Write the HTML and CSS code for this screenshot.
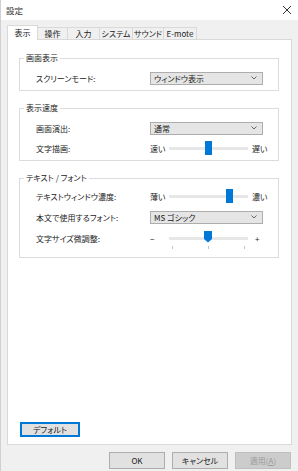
FILE: index.html
```html
<!DOCTYPE html>
<html lang="ja">
<head>
    <meta charset="UTF-8">
    <title>設定</title>
    <link rel="stylesheet" href="styles.css">
</head>
<body>
<div class="dialog">
    <div class="title-bar">
        <span class="title-text">設定</span>
        <svg class="close-icon" width="10" height="10" viewBox="0 0 10 10">
            <path d="M1 1 L9 9 M9 1 L1 9" stroke="#333" stroke-width="1" fill="none"/>
        </svg>
    </div>

    <div class="tab-strip">
        <div class="tab tab-active" style="width: 31px">表示</div>
        <div class="tab" style="width: 31px">操作</div>
        <div class="tab" style="width: 33px">入力</div>
        <div class="tab" style="width: 34px">システム</div>
        <div class="tab" style="width: 32px">サウンド</div>
        <div class="tab" style="width: 34px">E-mote</div>
    </div>

    <div class="tab-panel">
        <!-- 画面表示 -->
        <fieldset class="group">
            <legend class="group-title">画面表示</legend>
            <div class="group-body">
                <div class="row">
                    <span class="row-label">スクリーンモード:</span>
                    <div class="select">
                        <span>ウィンドウ表示</span>
                        <svg class="chevron" width="6" height="4" viewBox="0 0 6 4"><path d="M0.5 0.5 L3 3 L5.5 0.5" stroke="#666" fill="none"/></svg>
                    </div>
                </div>
            </div>
        </fieldset>

        <!-- 表示速度 -->
        <fieldset class="group">
            <legend class="group-title">表示速度</legend>
            <div class="group-body">
                <div class="row">
                    <span class="row-label">画面演出:</span>
                    <div class="select">
                        <span>通常</span>
                        <svg class="chevron" width="6" height="4" viewBox="0 0 6 4"><path d="M0.5 0.5 L3 3 L5.5 0.5" stroke="#666" fill="none"/></svg>
                    </div>
                </div>
                <div class="row">
                    <span class="row-label">文字描画:</span>
                    <div class="slider">
                        <span class="slider-end">速い</span>
                        <div class="track">
                            <div class="thumb" style="left: 36px"></div>
                        </div>
                        <span class="slider-end">遅い</span>
                    </div>
                </div>
            </div>
        </fieldset>

        <!-- テキスト / フォント -->
        <fieldset class="group">
            <legend class="group-title">テキスト / フォント</legend>
            <div class="group-body group-body-text">
                <div class="row">
                    <span class="row-label">テキストウィンドウ濃度:</span>
                    <div class="slider">
                        <span class="slider-end">薄い</span>
                        <div class="track">
                            <div class="thumb" style="left: 57px"></div>
                        </div>
                        <span class="slider-end">濃い</span>
                    </div>
                </div>
                <div class="row">
                    <span class="row-label">本文で使用するフォント:</span>
                    <div class="select">
                        <span>MS ゴシック</span>
                        <svg class="chevron" width="6" height="4" viewBox="0 0 6 4"><path d="M0.5 0.5 L3 3 L5.5 0.5" stroke="#666" fill="none"/></svg>
                    </div>
                </div>
                <div class="row">
                    <span class="row-label">文字サイズ微調整:</span>
                    <div class="slider">
                        <span class="slider-end">−</span>
                        <div class="track">
                            <div class="thumb thumb-point" style="left: 35px"></div>
                            <span class="tick" style="left: 3px"></span>
                            <span class="tick" style="left: 39px"></span>
                            <span class="tick" style="left: 75px"></span>
                        </div>
                        <span class="slider-end slider-plus">+</span>
                    </div>
                </div>
            </div>
        </fieldset>

        <button class="btn btn-default">デフォルト</button>
    </div>

    <div class="button-bar">
        <button class="btn btn-footer">OK</button>
        <button class="btn btn-footer">キャンセル</button>
        <button class="btn btn-footer btn-disabled">適用(<u>A</u>)</button>
    </div>
</div>
</body>
</html>
```

FILE: styles.css
```css
* {
    margin: 0;
    padding: 0;
    box-sizing: border-box;
}

body {
    font-family: "Noto Sans CJK JP", "Noto Sans", sans-serif;
    font-size: 8px;
    font-feature-settings: "palt";
    color: #1a1a1a;
    background: #f0f0f0;
}

.dialog {
    width: 298px;
    height: 471px;
    display: flex;
    flex-direction: column;
    border-left: 1px solid #d0d0d0;
}

/* タイトルバー */
.title-bar {
    height: 20px;
    background: #ffffff;
    display: flex;
    align-items: center;
    justify-content: space-between;
    padding: 0 6px 0 5px;
}

.title-text {
    font-size: 8.5px;
    color: #333;
}

/* タブ */
.tab-strip {
    display: flex;
    align-items: flex-end;
    height: 19px;
    padding-left: 6px;
}

.tab {
    height: 12px;
    line-height: 11px;
    text-align: center;
    white-space: nowrap;
    border: 1px solid #d9d9d9;
    border-bottom: none;
    margin-right: -1px;
    background: #f0f0f0;
    color: #222;
}

.tab-active {
    position: relative;
    z-index: 1;
    height: 15px;
    line-height: 13px;
    margin-bottom: -1px;
    background: #ffffff;
}

.tab-panel {
    height: 406px;
    margin: 0 6px;
    background: #ffffff;
    border: 1px solid #d9d9d9;
    padding: 12px 12px 7px 11px;
    display: flex;
    flex-direction: column;
    gap: 11px;
}

/* グループボックス */
.group {
    border: 1px solid #dcdcdc;
    min-width: 0;
}

.group-title {
    margin-left: 4px;
    padding: 0 2px;
    line-height: 12px;
    color: #222;
}

.group-body {
    padding: 7px 14px 5px 16px;
    display: flex;
    flex-direction: column;
    gap: 6px;
}

.group-body-text {
    padding-top: 5px;
    padding-bottom: 12px;
    gap: 7px;
}

.row {
    display: flex;
    align-items: center;
    height: 14px;
}

.row-label {
    width: 114px;
    flex-shrink: 0;
    white-space: nowrap;
    color: #222;
}

/* ドロップダウン */
.select {
    width: 113px;
    height: 13px;
    background: #e5e5e5;
    border: 1px solid #adadad;
    display: flex;
    align-items: center;
    justify-content: space-between;
    padding: 0 5px 0 3px;
    color: #1a1a1a;
}

.chevron {
    display: block;
}

/* スライダー */
.slider {
    display: flex;
    align-items: center;
    gap: 4px;
    flex-shrink: 0;
    margin-right: -16px;
}

.slider-end {
    width: 15px;
    flex-shrink: 0;
    white-space: nowrap;
    color: #222;
}

.slider-plus {
    padding-left: 3px;
}

.track {
    position: relative;
    flex-shrink: 0;
    width: 79px;
    height: 3px;
    background: #e7e7e7;
}

.thumb {
    position: absolute;
    top: -6px;
    width: 7px;
    height: 14px;
    background: #0078d7;
}

.thumb-point {
    height: 12px;
    width: 8px;
    clip-path: polygon(0 0, 100% 0, 100% 70%, 50% 100%, 0 70%);
}

.tick {
    position: absolute;
    top: 9px;
    width: 1px;
    height: 3px;
    background: #c4c4c4;
}

/* ボタン */
.btn {
    font-family: inherit;
    font-size: 8px;
    font-feature-settings: "palt";
    background: #e1e1e1;
    border: 1px solid #adadad;
    color: #1a1a1a;
    height: 16px;
}

.btn-default {
    margin-top: auto;
    margin-left: 1px;
    width: 60px;
    height: 15px;
    border-color: #0078d7;
    box-shadow: inset 0 0 0 1px #0078d7;
}

.button-bar {
    display: flex;
    justify-content: flex-end;
    gap: 7px;
    padding: 7px 7px 0 0;
}

.btn-footer {
    width: 56px;
    height: 17px;
}

.btn-disabled {
    background: #cccccc;
    border-color: #bfbfbf;
    color: #9a9a9a;
}
```
